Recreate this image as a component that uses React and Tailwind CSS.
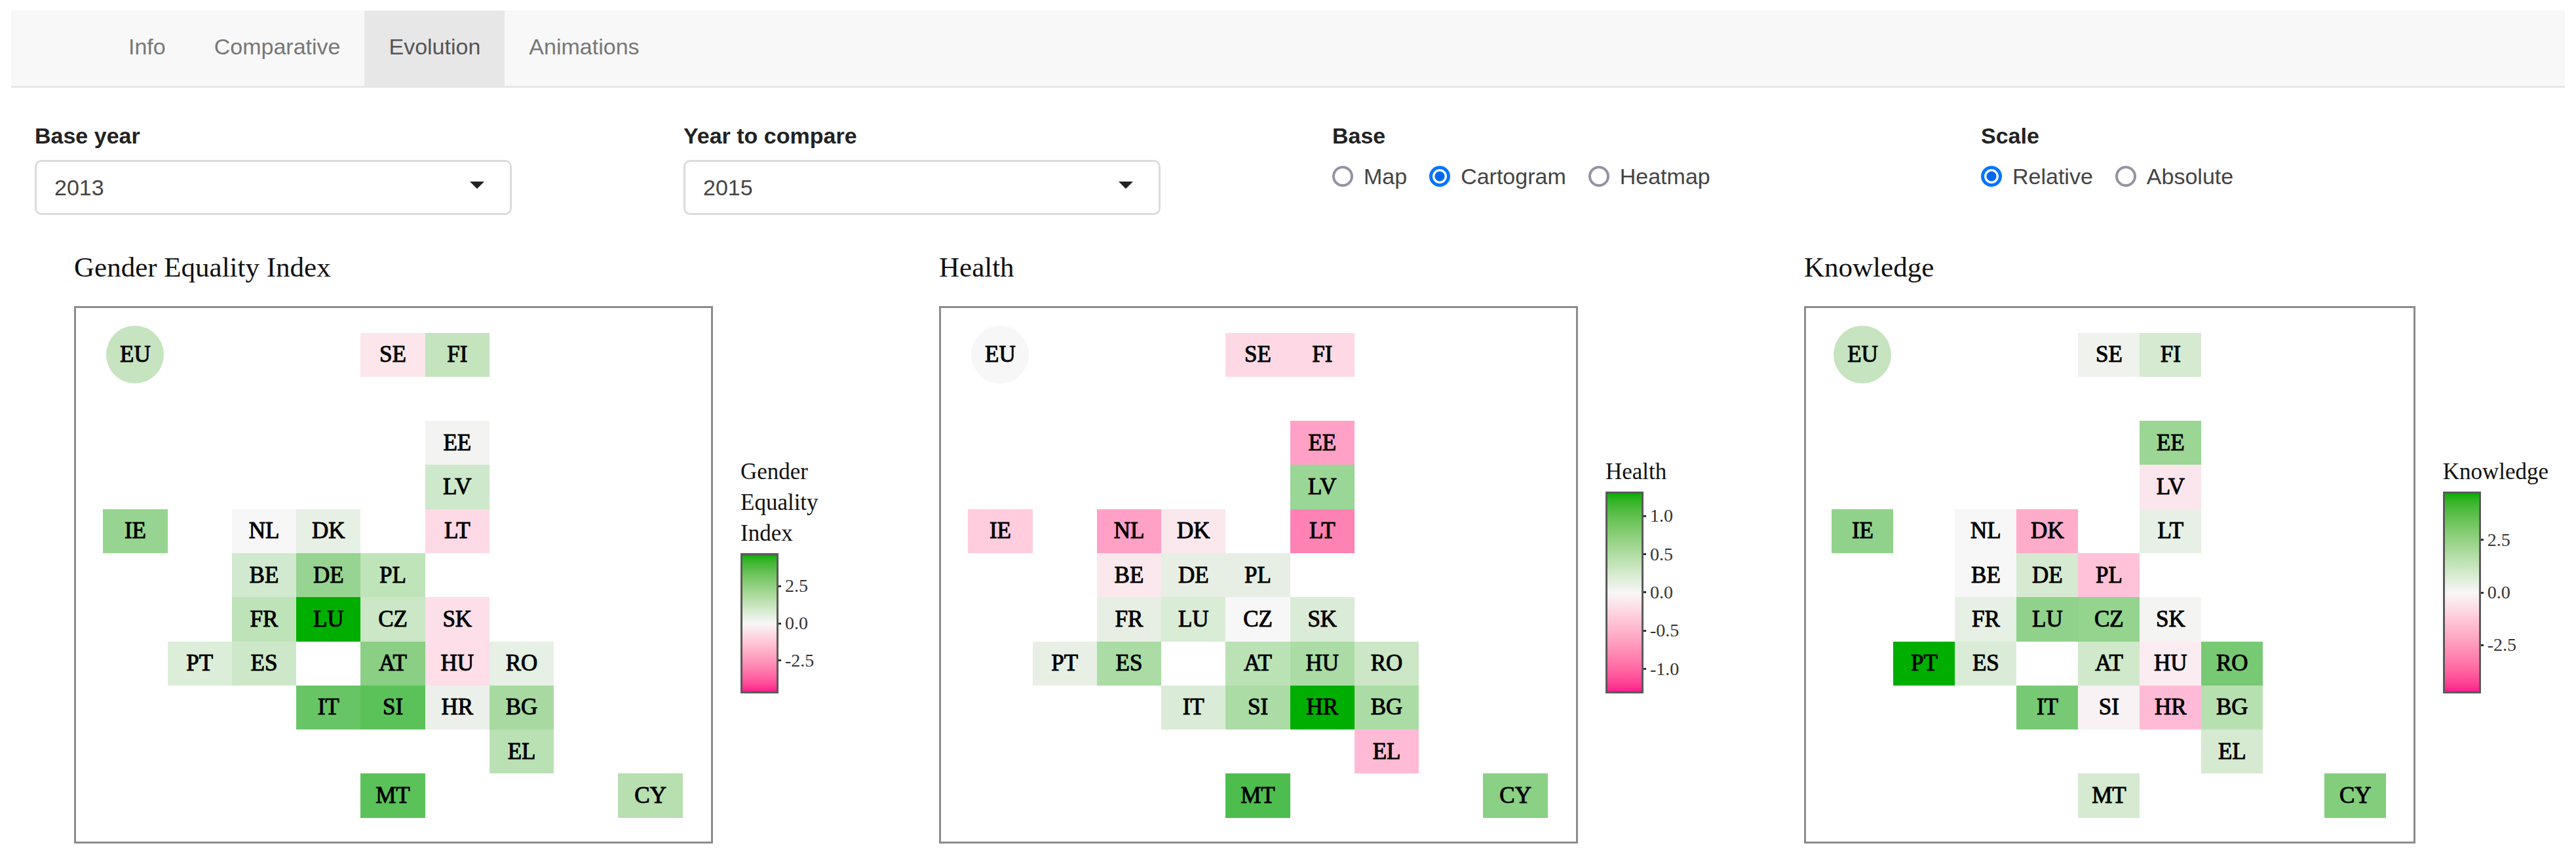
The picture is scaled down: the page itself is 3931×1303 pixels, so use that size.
import { useState } from 'react';

const TABS = ['Info', 'Comparative', 'Evolution', 'Animations'];
const YEARS = ['2013', '2015', '2017', '2018', '2019'];

// Grid place of each country: [column, row]
const POSITIONS = {
  EU: [1, 1], SE: [5, 1], FI: [6, 1],
  EE: [6, 3],
  LV: [6, 4],
  IE: [1, 5], NL: [3, 5], DK: [4, 5], LT: [6, 5],
  BE: [3, 6], DE: [4, 6], PL: [5, 6],
  FR: [3, 7], LU: [4, 7], CZ: [5, 7], SK: [6, 7],
  PT: [2, 8], ES: [3, 8], AT: [5, 8], HU: [6, 8], RO: [7, 8],
  IT: [4, 9], SI: [5, 9], HR: [6, 9], BG: [7, 9],
  EL: [7, 10],
  MT: [5, 11], CY: [9, 11],
};

const CHARTS = [
  {
    title: 'Gender Equality Index',
    legend: ['Gender', 'Equality', 'Index'],
    max: 4.73,
    ticks: ['2.5', '0.0', '-2.5'],
    colors: {
      EU: '#c5e4bf', SE: '#fce6ec', FI: '#c3e4bd', EE: '#f3f3f2', LV: '#cde8ca',
      IE: '#97d491', NL: '#f7f7f7', DK: '#e6f0e4', LT: '#fddae6', BE: '#d1e9ce',
      DE: '#97d491', PL: '#bfe4b9', FR: '#bee3b8', LU: '#00ae00', CZ: '#cbe7c6',
      SK: '#fddfe9', PT: '#dceed9', ES: '#cde8c9', AT: '#8acf84', HU: '#fddee9',
      RO: '#e6f0e4', IT: '#68c566', SI: '#5bc259', HR: '#ebf1ea', BG: '#a7d9a1',
      EL: '#b9e1b3', MT: '#5bc259', CY: '#b7dfb0',
    },
  },
  {
    title: 'Health',
    legend: ['Health'],
    max: 1.317,
    ticks: ['1.0', '0.5', '0.0', '-0.5', '-1.0'],
    colors: {
      EU: '#f7f7f7', SE: '#fed9e5', FI: '#fed9e5', EE: '#ffa1c6', LV: '#9ad695',
      IE: '#ffcdde', NL: '#ffa1c6', DK: '#fae8ed', LT: '#ff82b4', BE: '#fae8ed',
      DE: '#e7efe4', PL: '#e7efe4', FR: '#e7efe4', LU: '#d9ecd5', CZ: '#f7f7f7',
      SK: '#daecd7', PT: '#e8f0e6', ES: '#abdca5', AT: '#bbe2b5', HU: '#abdca5',
      RO: '#cbe7c6', IT: '#daecd7', SI: '#abdca5', HR: '#00ae00', BG: '#abdca5',
      EL: '#ffbbd5', MT: '#4dbe4d', CY: '#8ad085',
    },
  },
  {
    title: 'Knowledge',
    legend: ['Knowledge'],
    max: 4.8,
    ticks: ['2.5', '0.0', '-2.5'],
    colors: {
      EU: '#c5e4bf', SE: '#eff2ed', FI: '#d5ead0', EE: '#9bd695', LV: '#fbe6ed',
      IE: '#90d28b', NL: '#f7f7f7', DK: '#ffaccb', LT: '#e6f0e4', BE: '#f7f7f7',
      DE: '#d5ead0', PL: '#ffc2d9', FR: '#e6f0e4', LU: '#90d28b', CZ: '#94d48e',
      SK: '#f4f4f3', PT: '#00ae00', ES: '#daecd7', AT: '#cfe9ca', HU: '#faecf1',
      RO: '#77ca73', IT: '#77ca73', SI: '#f8f2f4', HR: '#ffbbd5', BG: '#b7e0b1',
      EL: '#d5ead0', MT: '#d5ead0', CY: '#82ce7d',
    },
  },
];

const Navbar = ({ active, onSelect }) => (
  <nav className="flex bg-[#f8f8f8] border-b-[3px] border-[#e7e7e7] pl-[142px]">
    {TABS.map((tab) => (
      <a
        key={tab}
        href={`#${tab.toLowerCase()}`}
        onClick={() => onSelect(tab)}
        className={`px-[37px] pt-[30px] pb-[35px] ${
          tab === active ? 'bg-[#e7e7e7] text-[#555555]' : 'text-[#777777]'
        }`}
      >
        {tab}
      </a>
    ))}
  </nav>
);

const YearSelect = ({ id, label, value, onChange }) => (
  <div>
    <label htmlFor={id} className="block font-bold text-[#222222]">{label}</label>
    <div className="relative mt-3">
      <select
        id={id}
        value={value}
        onChange={(e) => onChange(e.target.value)}
        className="block w-full h-[84px] pl-[27px] pr-20 appearance-none bg-white border-[3px] border-[#dcdcdc] rounded-[10px]"
      >
        {YEARS.map((year) => (
          <option key={year}>{year}</option>
        ))}
      </select>
      <svg
        viewBox="0 0 22 11"
        className="absolute right-[42px] top-[33px] w-[22px] h-[11px] pointer-events-none"
        aria-hidden="true"
      >
        <path d="M0 0h22L11 11z" fill="#222222" />
      </svg>
    </div>
  </div>
);

const RadioGroup = ({ name, label, options, value, onChange }) => (
  <fieldset>
    <legend className="font-bold text-[#222222]">{label}</legend>
    <div className="flex gap-[34px] mt-3 whitespace-nowrap">
      {options.map((option) => (
        <label key={option} className="flex items-center gap-4">
          <input
            type="radio"
            name={name}
            checked={value === option}
            onChange={() => onChange(option)}
            className="appearance-none size-8 rounded-full bg-white border-4 border-[#9393a0] checked:border-[5px] checked:border-[#0075ff] checked:bg-[radial-gradient(circle,#0068ee_7px,#ffffff_8px)]"
          />
          {option}
        </label>
      ))}
    </div>
  </fieldset>
);

const Cartogram = ({ colors }) => (
  <div className="flex-1 h-[820px] border-[3px] border-[#8c8c8c] grid grid-cols-[21fr_repeat(9,50fr)_22fr] grid-rows-[28fr_repeat(11,50fr)_27fr] text-[35px] leading-10 text-black [-webkit-text-stroke:1px_black]">
    {Object.entries(POSITIONS).map(([code, [col, row]]) => (
      <div
        key={code}
        className={`flex items-center justify-center ${
          code === 'EU' ? 'size-[88px] -my-3 rounded-full place-self-center' : ''
        }`}
        style={{ gridColumn: col + 1, gridRow: row + 1, backgroundColor: colors[code] }}
      >
        {code}
      </div>
    ))}
  </div>
);

const Legend = ({ lines, ticks, max }) => (
  <div className="flex flex-col h-[362px] min-w-[119px] gap-[7px]">
    <div className="text-[35px] leading-[47px]">
      {lines.map((line) => (
        <div key={line}>{line}</div>
      ))}
    </div>
    <div className="flex flex-1 items-center">
      <div className="self-stretch w-[58px] border-[3px] border-[#5a5a5a] bg-[linear-gradient(in_lab,#00ae00,#f7f7f7,#fb1b8c)]" />
      {/* ticks are symmetric round zero, so the column only spans the outer two */}
      <div
        className="flex flex-col justify-between text-[28px] leading-8 text-[#333333]"
        style={{ height: `${(Number(ticks[0]) / max) * 100}%` }}
      >
        {ticks.map((tick) => (
          <div key={tick} className="flex items-center h-0 gap-1.5">
            <span className="w-1 h-[3px] bg-[#333333]" />
            {tick}
          </div>
        ))}
      </div>
    </div>
  </div>
);

const Chart = ({ title, legend, ticks, max, colors }) => (
  <section>
    <h2 className="text-[43px] leading-[50px] mb-[34px]">{title}</h2>
    <div className="flex items-center gap-[42px]">
      <Cartogram colors={colors} />
      <Legend lines={legend} ticks={ticks} max={max} />
    </div>
  </section>
);

const App = () => {
  const [tab, setTab] = useState('Evolution');
  const [baseYear, setBaseYear] = useState('2013');
  const [compareYear, setCompareYear] = useState('2015');
  const [base, setBase] = useState('Cartogram');
  const [scale, setScale] = useState('Relative');

  return (
    <div className="bg-white pt-4 pb-4 font-['Liberation_Sans',Arial,sans-serif] text-[34px] leading-[50px] text-[#444444]">
      <header className="px-[17px]">
        <Navbar active={tab} onSelect={setTab} />
      </header>

      <main>
        {/* Filters */}
        <div className="grid grid-cols-4 gap-[262px] pl-[53px] pr-[180px] pt-12">
          <YearSelect id="base-year" label="Base year" value={baseYear} onChange={setBaseYear} />
          <YearSelect id="compare-year" label="Year to compare" value={compareYear} onChange={setCompareYear} />
          <RadioGroup
            name="base"
            label="Base"
            options={['Map', 'Cartogram', 'Heatmap']}
            value={base}
            onChange={setBase}
          />
          <RadioGroup
            name="scale"
            label="Scale"
            options={['Relative', 'Absolute']}
            value={scale}
            onChange={setScale}
          />
        </div>

        {/* Charts */}
        <div className="grid grid-cols-3 gap-[184px] pl-[113px] pr-[42px] pt-[55px] font-['Liberation_Serif','Times_New_Roman',serif] text-[#111111]">
          {CHARTS.map((chart) => (
            <Chart key={chart.title} {...chart} />
          ))}
        </div>
      </main>
    </div>
  );
};

export default App;
